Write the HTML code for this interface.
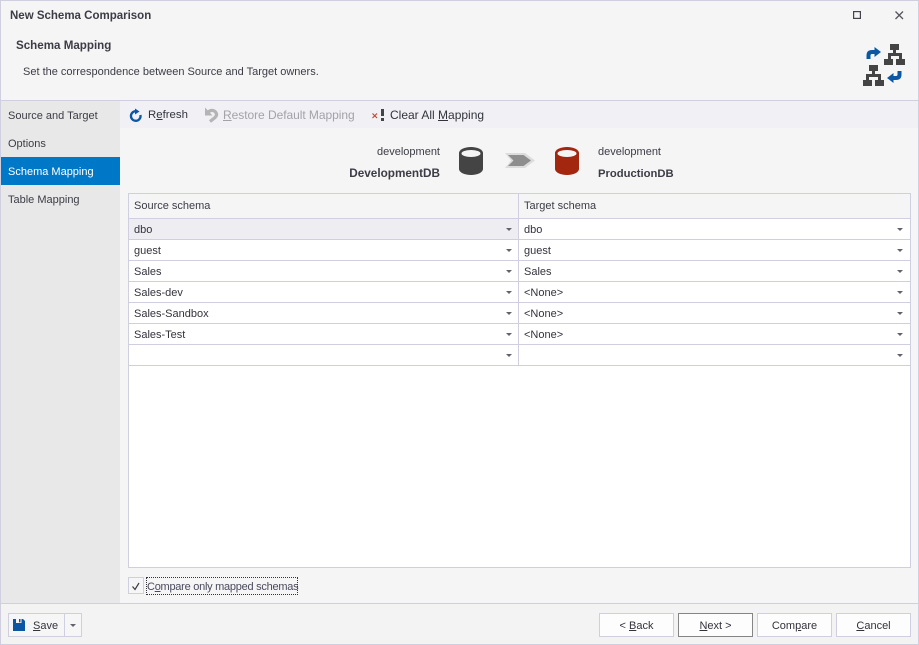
<!DOCTYPE html>
<html><head><meta charset="utf-8">
<style>
html,body{margin:0;padding:0}
body{width:919px;height:645px;overflow:hidden;position:relative;background:#f5f5f5;font-family:"Liberation Sans",sans-serif;font-size:11px;color:#3c3c46}
.a{position:absolute}
.t{position:absolute;white-space:nowrap;line-height:16px;height:16px}
.b{font-weight:bold}
.btn{position:absolute;top:613px;width:73px;height:22px;border:1px solid #cfcfe0;background:#fdfdfd;text-align:center;line-height:24px;color:#33333d}
.row{position:absolute;left:129px;width:781px;height:20px;background:#fff;border-bottom:1px solid #cfcfe0}
.row .l{position:absolute;left:5px;top:3px;line-height:16px;white-space:nowrap;color:#33333d}
.row .r{position:absolute;left:395px;top:3px;line-height:16px;white-space:nowrap;color:#33333d}
.row i{position:absolute;top:9px;width:0;height:0;border-left:3px solid transparent;border-right:3px solid transparent;border-top:3px solid #62626c}
.row i.x{left:377px}
.row i.y{left:768px}
</style></head><body>
<div class="a" style="left:0;top:0;width:917px;height:643px;border:1px solid #cfcfe0"></div>
<div class="a" style="left:1px;top:100px;width:917px;height:1px;background:#cfcfe0"></div>
<div class="t b" style="left:10px;top:8px;font-size:11.5px">New Schema Comparison</div>
<div class="t b" style="left:16px;top:38px;font-size:11.6px">Schema Mapping</div>
<div class="t" style="left:23px;top:64px">Set the correspondence between Source and Target owners.</div>
<svg class="a" style="left:850px;top:8px" width="16" height="16"><rect x="3.600" y="3.600" width="6.800" height="6.800" fill="none" stroke="#44444c" stroke-width="1.200"/></svg>
<svg class="a" style="left:895px;top:11px" width="9" height="9"><path d="M.5 .5L8 8M8 .5L.5 8" stroke="#55555d" stroke-width="1.300" fill="none"/></svg>
<svg class="a" style="left:862px;top:43px" width="44" height="44" viewBox="0 0 44 44">
<g fill="#444"><rect x="28" y="1" width="9" height="6"/><rect x="31" y="7" width="3" height="3"/><rect x="26" y="10" width="14" height="3"/><rect x="26" y="13" width="3" height="3"/><rect x="37" y="13" width="3" height="3"/><rect x="22" y="16" width="9" height="6"/><rect x="34" y="16" width="9" height="6"/></g>
<g fill="#444"><rect x="7" y="22" width="9" height="6"/><rect x="10" y="28" width="3" height="3"/><rect x="4" y="31" width="15" height="3"/><rect x="4" y="34" width="3" height="3"/><rect x="16" y="34" width="3" height="3"/><rect x="1" y="37" width="9" height="6"/><rect x="13" y="37" width="9" height="6"/></g>
<path d="M6.500 16V12.500Q6.500 9 10 9H14" fill="none" stroke="#0b57a4" stroke-width="4"/><path d="M12.500 4L19 9L12.500 14Z" fill="#0b57a4"/>
<path d="M37.500 28V31.500Q37.500 35 34 35H30" fill="none" stroke="#0b57a4" stroke-width="4"/><path d="M31.500 30L25 35L31.500 40Z" fill="#0b57a4"/>
</svg>

<div class="a" style="left:1px;top:101px;width:119px;height:502px;background:#e8e8e8"></div>
<div class="a" style="left:1px;top:157px;width:119px;height:28px;background:#0078c8"></div>
<div class="t" style="left:8px;top:108px">Source and Target</div>
<div class="t" style="left:8px;top:136px">Options</div>
<div class="t" style="left:8px;top:164px;color:#fff">Schema Mapping</div>
<div class="t" style="left:8px;top:192px">Table Mapping</div>

<div class="a" style="left:120px;top:101px;width:798px;height:27px;background:#f0f0f5"></div>
<svg class="a" style="left:129px;top:107px" width="16" height="16" viewBox="0 0 16 16"><path d="M10.800 6.500A4.800 4.800 0 1 1 6.500 4.300" fill="none" stroke="#0b57a4" stroke-width="2.300" transform="rotate(20 7 9)"/><path d="M6 1.500L10.500 4.500L6 7.500Z" fill="#0b57a4"/></svg>
<div class="t" style="left:148px;top:107px;color:#33333d;font-size:11.400px">R<u>e</u>fresh</div>
<svg class="a" style="left:203px;top:106px" width="16" height="17" viewBox="0 0 16 17"><path d="M5 6Q9 3 12 5.500Q15 8.500 12 11.500L7 15.500" fill="none" stroke="#b4b4b4" stroke-width="3.200"/><path d="M2 1.500V9.500H9.500Z" fill="#b4b4b4"/></svg>
<div class="t" style="left:223px;top:107px;color:#a2a2a8;font-size:12px;letter-spacing:-.05px"><u>R</u>estore Default Mapping</div>
<svg class="a" style="left:371px;top:109px" width="14" height="13" viewBox="0 0 14 13"><path d="M1.500 4.500L6 9M6 4.500L1.500 9" stroke="#c8402c" stroke-width="1.100" fill="none"/><rect x="10" y="0" width="3" height="7" fill="#444"/><rect x="10" y="9" width="3" height="3" fill="#444"/></svg>
<div class="t" style="left:390px;top:107px;color:#33333d;font-size:12px"><span>Clear All <u>M</u>apping</span></div>

<div class="t" style="left:300px;width:140px;text-align:right;top:144px">development</div>
<div class="t b" style="left:300px;width:140px;text-align:right;top:166px;font-size:11.750px">DevelopmentDB</div>
<svg class="a" style="left:458px;top:146px" width="26" height="30" viewBox="0 0 26 30"><path d="M1 7A12 6 0 0 1 25 7V23A12 6 0 0 1 1 23Z" fill="#444"/><ellipse cx="13" cy="7.500" rx="9.500" ry="3.500" fill="#f4f4f4"/></svg>
<svg class="a" style="left:504px;top:152px" width="32" height="17" viewBox="0 0 32 17"><path d="M1 1H21L31 8.500L21 16H1L7 8.500Z" fill="#dcdcdc"/><path d="M4 3H19.500L27 8.500L19.500 14H4L9.500 8.500Z" fill="#8e8e8e"/></svg>
<svg class="a" style="left:554px;top:146px" width="26" height="30" viewBox="0 0 26 30"><path d="M1 7A12 6 0 0 1 25 7V23A12 6 0 0 1 1 23Z" fill="#a3260f"/><ellipse cx="13" cy="7.500" rx="9.500" ry="3.500" fill="#f4f4f4"/></svg>
<div class="t" style="left:598px;top:144px">development</div>
<div class="t b" style="left:598px;top:166px;font-size:11.250px">ProductionDB</div>

<div class="a" style="left:128px;top:193px;width:781px;height:373px;border:1px solid #cfcfe0;background:#fff"></div>
<div class="a" style="left:129px;top:194px;width:781px;height:24px;background:#f5f5f5;border-bottom:1px solid #cfcfe0"></div>
<div class="t" style="left:134px;top:198px">Source schema</div>
<div class="t" style="left:524px;top:198px">Target schema</div>

<div class="row" style="top:219px"><div class="a" style="left:0;top:0;width:389px;height:20px;background:#eeeef2"></div><span class="l">dbo</span><i class="x"></i><span class="r">dbo</span><i class="y"></i></div>
<div class="row" style="top:240px"><span class="l">guest</span><i class="x"></i><span class="r">guest</span><i class="y"></i></div>
<div class="row" style="top:261px"><span class="l">Sales</span><i class="x"></i><span class="r">Sales</span><i class="y"></i></div>
<div class="row" style="top:282px"><span class="l">Sales-dev</span><i class="x"></i><span class="r">&lt;None&gt;</span><i class="y"></i></div>
<div class="row" style="top:303px"><span class="l">Sales-Sandbox</span><i class="x"></i><span class="r">&lt;None&gt;</span><i class="y"></i></div>
<div class="row" style="top:324px"><span class="l">Sales-Test</span><i class="x"></i><span class="r">&lt;None&gt;</span><i class="y"></i></div>
<div class="row" style="top:345px"><i class="x"></i><i class="y"></i></div>
<div class="a" style="left:518px;top:194px;width:1px;height:172px;background:#cfcfe0"></div>

<div class="a" style="left:128px;top:577px;width:14px;height:15px;border:1px solid #cfcfe0;background:#f6f6f6"></div>
<svg class="a" style="left:129px;top:578px" width="14" height="14"><path d="M3.500 8.500L6 11.500L10 5" fill="none" stroke="#3c3c46" stroke-width="1.200"/></svg>
<div class="a" style="left:146px;top:577px;width:150px;height:16px;border:1px dotted #33333d"></div>
<div class="t" style="left:147px;top:579px;color:#4a4a5c;letter-spacing:-.26px"><span>C<u>o</u>mpare only mapped schemas</span></div>

<div class="a" style="left:1px;top:603px;width:917px;height:1px;background:#cfcfe0"></div>
<div class="a" style="left:1px;top:604px;width:917px;height:40px;background:#f3f3f3"></div>
<div class="a" style="left:8px;top:613px;width:72px;height:22px;border:1px solid #cfcfe0;background:#f6f6f6"></div>
<div class="a" style="left:64px;top:613px;width:1px;height:24px;background:#cfcfe0"></div>
<svg class="a" style="left:13px;top:619px" width="12" height="12" viewBox="0 0 12 12"><path d="M0 0H10L12 2V12H0Z" fill="#0b57a4"/><rect x="3" y="0" width="5.500" height="4" fill="#f6f6f6"/><rect x="6" y="0" width="1.500" height="3.300" fill="#0b57a4"/></svg>
<div class="t" style="left:33px;top:618px;color:#33333d"><u>S</u>ave</div>
<div class="a" style="left:70px;top:624px;width:0;height:0;border-left:3px solid transparent;border-right:3px solid transparent;border-top:3px solid #62626c"></div>
<div class="btn" style="left:599px">&lt; <u>B</u>ack</div>
<div class="btn" style="left:678px;border-color:#858585"><u>N</u>ext &gt;</div>
<div class="btn" style="left:757px">Com<u>p</u>are</div>
<div class="btn" style="left:836px"><u>C</u>ancel</div>
</body></html>
